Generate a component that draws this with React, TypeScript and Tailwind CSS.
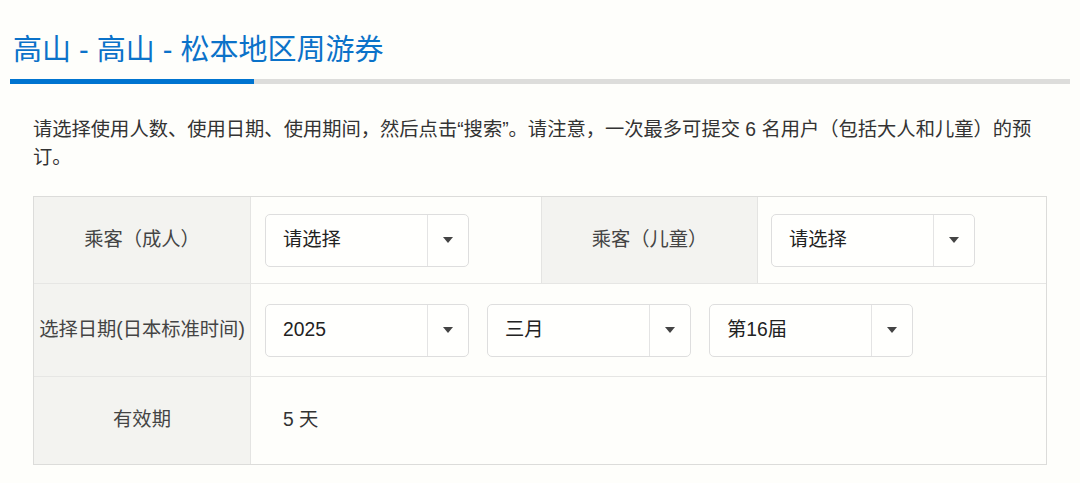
const font = "font-['Liberation_Sans','Noto_Sans_CJK_SC',sans-serif]";

function Select({ value }: { value: string }) {
  return (
    <div className="flex h-[53px] w-[204px] shrink-0 rounded-[5px] border border-[#dedede] bg-[#fffffd]">
      <div className="flex flex-1 items-center pl-[17px] text-[19.3px] text-[#222]">{value}</div>
      <div className="flex w-[41px] items-center justify-center border-l border-[#e4e4e4]">
        <svg width="10" height="6" viewBox="0 0 10 6">
          <path d="M0 0h10L5 6z" fill="#444" />
        </svg>
      </div>
    </div>
  );
}

function Label({ children, className = "" }: { children: React.ReactNode; className?: string }) {
  return (
    <div
      className={`flex w-[217px] shrink-0 items-center justify-center whitespace-nowrap border-r border-[#e4e4e2] bg-[#f3f3f0] text-[19.3px] text-[#444] ${className}`}
    >
      {children}
    </div>
  );
}

export default function App() {
  return (
    <div className={`min-h-screen bg-[#fefefb] ${font}`}>
      <div className="px-[10px] pt-[30px]">
        <h1 className="pl-[3px] text-[29px] leading-[40px] text-[#0b72c9]">高山 - 高山 - 松本地区周游券</h1>
        <div className="mt-[9px] flex h-[5px]">
          <div className="w-[244px] bg-[#0074d0]" />
          <div className="flex-1 bg-[#dddddb]" />
        </div>
      </div>

      <div className="mx-[33px]">
        <p className="mt-[32px] text-[19.3px] leading-[28px] text-[#333]">
          请选择使用人数、使用日期、使用期间，然后点击“搜索”。请注意，一次最多可提交 6 名用户（包括大人和儿童）的预订。
        </p>

        <div className="mt-[24px] border border-[#dcdcda]">
          <div className="flex h-[87px] border-b border-[#e6e6e4]">
            <Label>乘客（成人）</Label>
            <div className="flex w-[290px] shrink-0 items-center pl-[14px]">
              <Select value="请选择" />
            </div>
            <Label className="border-l">乘客（儿童）</Label>
            <div className="flex flex-1 items-center pl-[13px]">
              <Select value="请选择" />
            </div>
          </div>

          <div className="flex h-[93px] border-b border-[#e6e6e4]">
            <Label>选择日期(日本标准时间)</Label>
            <div className="flex flex-1 items-center gap-[18px] pl-[14px]">
              <Select value="2025" />
              <Select value="三月" />
              <Select value="第16届" />
            </div>
          </div>

          <div className="flex h-[87px]">
            <Label>有效期</Label>
            <div className="flex flex-1 items-center pl-[32px] text-[19.3px] text-[#333]">5 天</div>
          </div>
        </div>
      </div>
    </div>
  );
}
